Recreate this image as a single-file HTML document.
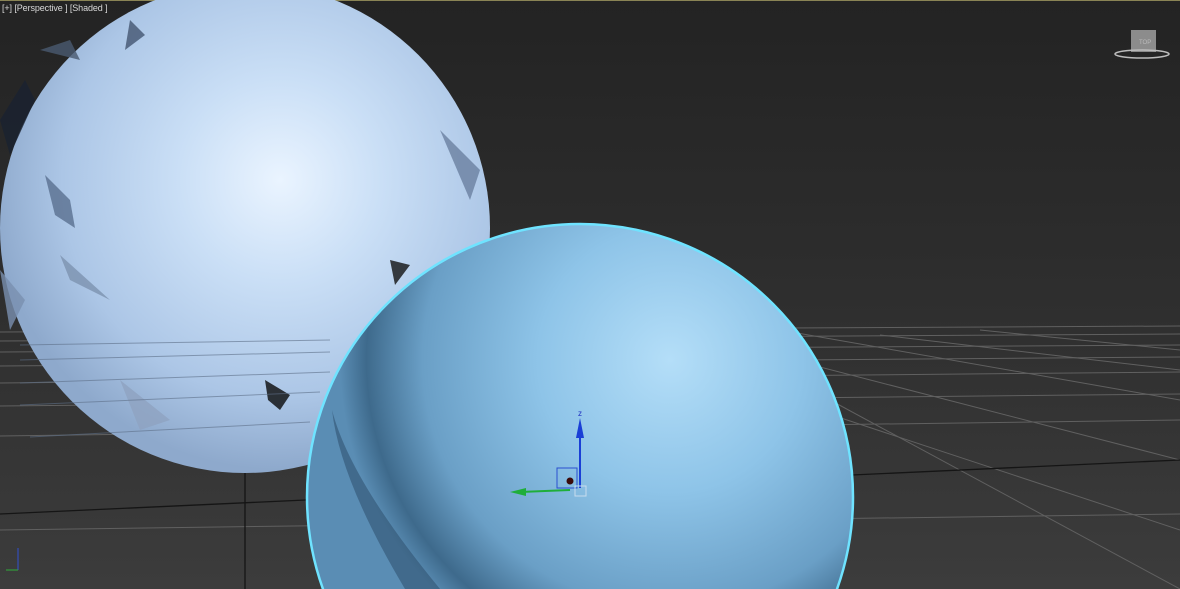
<!DOCTYPE html>
<html><head><style>
html,body{margin:0;padding:0;width:1180px;height:589px;overflow:hidden;background:#2a2a2a}
svg{display:block;position:absolute;left:0;top:0}
.lbl{position:absolute;left:2px;top:3px;font:9px "Liberation Sans",sans-serif;color:#d8d8d8;white-space:pre;letter-spacing:-0.1px}
</style></head><body>
<svg width="1180" height="589" viewBox="0 0 1180 589">
<defs>
<linearGradient id="bg" x1="0" y1="0" x2="0" y2="1">
<stop offset="0" stop-color="#232323"/><stop offset="0.5" stop-color="#2e2e2e"/><stop offset="1" stop-color="#3c3c3c"/>
</linearGradient>
<radialGradient id="s1" cx="280" cy="180" r="290" gradientUnits="userSpaceOnUse">
<stop offset="0" stop-color="#eaf4ff"/><stop offset="0.35" stop-color="#cadff6"/><stop offset="0.75" stop-color="#acc6e6"/><stop offset="1" stop-color="#8ea9cc"/>
</radialGradient>
<radialGradient id="s2" cx="670" cy="360" r="330" gradientUnits="userSpaceOnUse">
<stop offset="0" stop-color="#b4def8"/><stop offset="0.4" stop-color="#8ec4e8"/><stop offset="0.75" stop-color="#6a9fc6"/><stop offset="0.92" stop-color="#3e6a8c"/><stop offset="1" stop-color="#5a8db4"/>
</radialGradient>
</defs>
<rect width="1180" height="589" fill="url(#bg)"/>
<line x1="0" y1="0.5" x2="1180" y2="0.5" stroke="#8a8455" stroke-width="1"/>
<g stroke="#606060" stroke-width="1" fill="none">
<path d="M0 332 L1180 326"/>
<path d="M0 341 L1180 334"/>
<path d="M0 352 L1180 345"/>
<path d="M0 366 L1180 357"/>
<path d="M0 383 L1180 372"/>
<path d="M0 406 L1180 394"/>
<path d="M0 436 L1180 420"/>
<path d="M0 530 L1180 514"/>
<path d="M780 330 L1180 400"/>
<path d="M700 336 L1180 460"/>
<path d="M620 345 L1180 530"/>
<path d="M880 335 L1180 370"/>
<path d="M980 330 L1180 350"/>
<path d="M830 400 L1180 589"/>
</g>
<path d="M0 514 L1180 460" stroke="#151515" stroke-width="1.3"/>
<line x1="245" y1="290" x2="245" y2="589" stroke="#141414" stroke-width="1.3"/>
<circle cx="245" cy="228" r="245" fill="url(#s1)"/>
<g opacity="0.8">
<path d="M0 120 L25 80 L35 100 L10 155Z" fill="#1a2230"/>
<path d="M45 175 L70 200 L75 228 L55 215Z" fill="#5a7090"/>
<path d="M60 255 L110 300 L70 280Z" fill="#7d93b0"/>
<path d="M265 380 L290 395 L280 410 L268 400Z" fill="#0a0a0a"/>
<path d="M40 50 L70 40 L80 60Z" fill="#4a5a70"/>
<path d="M0 270 L25 300 L10 330Z" fill="#7a90b0"/>
<path d="M120 380 L170 420 L140 430Z" fill="#8ea3c0"/>
<path d="M440 130 L480 170 L470 200Z" fill="#6a80a0"/>
<path d="M390 260 L410 265 L395 285Z" fill="#111"/>
<path d="M130 20 L145 35 L125 50Z" fill="#445570"/>
</g>
<g stroke="#5d6f88" stroke-width="1" opacity="0.6">
<line x1="20" y1="345" x2="330" y2="340"/><line x1="20" y1="360" x2="330" y2="352"/>
<line x1="20" y1="383" x2="330" y2="372"/><line x1="20" y1="405" x2="320" y2="392"/>
<line x1="30" y1="437" x2="310" y2="422"/>
</g>
<circle cx="580" cy="497" r="273" fill="url(#s2)" stroke="#6fe3ff" stroke-width="2.5"/>
<path d="M332 410 Q350 480 440 589 L405 589 Q340 480 332 410Z" fill="#2d4f6c" opacity="0.55"/>
<g>
<line x1="580" y1="488" x2="580" y2="430" stroke="#1a3fd6" stroke-width="2"/>
<path d="M576 438 L580 418 L584 438Z" fill="#1a3fd6"/>
<text x="578" y="416" font-family="Liberation Sans,sans-serif" font-size="8" fill="#2030c0">z</text>
<line x1="520" y1="492" x2="570" y2="490" stroke="#1fae3a" stroke-width="2"/>
<path d="M510 492 L526 488 L526 496Z" fill="#1fae3a"/>
<rect x="557" y="468" width="20" height="20" fill="none" stroke="#2a4fd0" stroke-width="1"/>
<circle cx="570" cy="481" r="3.5" fill="#3a0a0a"/>
<rect x="575" y="486" width="11" height="10" fill="none" stroke="#c8dcee" stroke-width="1"/>
</g>
<g>
<rect x="1131" y="30" width="25" height="22" fill="#8c8c8c"/>
<text x="1139" y="44" font-family="Liberation Sans,sans-serif" font-size="6" fill="#bbb">TOP</text>
<ellipse cx="1142" cy="54" rx="27" ry="4" fill="none" stroke="#bdbdbd" stroke-width="1.5"/>
</g>
<line x1="18" y1="548" x2="18" y2="570" stroke="#3050d0"/>
<line x1="6" y1="570" x2="18" y2="570" stroke="#2fae3a"/>
</svg>
<div class="lbl">[+] [Perspective ] [Shaded ]</div>
</body></html>
